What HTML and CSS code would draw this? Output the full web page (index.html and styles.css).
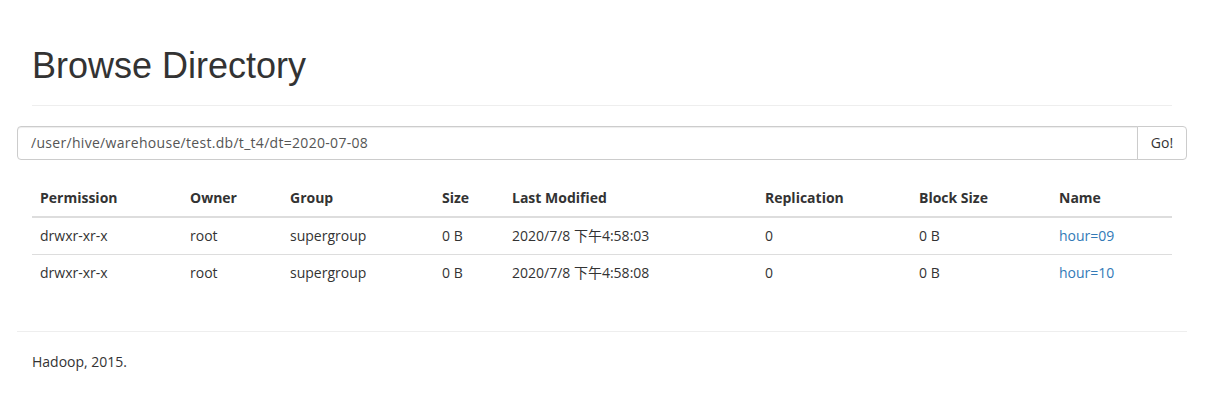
FILE: index.html
```html
<!DOCTYPE html>
<html>
<head>
<meta charset="utf-8">
<title>Browsing HDFS</title>
<link rel="stylesheet" href="styles.css">
</head>
<body>
<div class="container">
  <div class="page-header">
    <h1>Browse Directory</h1>
  </div>
  <div class="row">
    <form class="input-group">
      <input class="form-control" type="text" value="/user/hive/warehouse/test.db/t_t4/dt=2020-07-08">
      <button class="btn" type="button">Go!</button>
    </form>
  </div>
  <table class="table">
    <thead>
      <tr>
        <th class="c1">Permission</th>
        <th class="c2">Owner</th>
        <th class="c3">Group</th>
        <th class="c4">Size</th>
        <th class="c5">Last Modified</th>
        <th class="c6">Replication</th>
        <th class="c7">Block Size</th>
        <th class="c8">Name</th>
      </tr>
    </thead>
    <tbody>
      <tr>
        <td>drwxr-xr-x</td>
        <td>root</td>
        <td>supergroup</td>
        <td>0 B</td>
        <td>2020/7/8 下午4:58:03</td>
        <td>0</td>
        <td>0 B</td>
        <td><a href="#">hour=09</a></td>
      </tr>
      <tr>
        <td>drwxr-xr-x</td>
        <td>root</td>
        <td>supergroup</td>
        <td>0 B</td>
        <td>2020/7/8 下午4:58:08</td>
        <td>0</td>
        <td>0 B</td>
        <td><a href="#">hour=10</a></td>
      </tr>
    </tbody>
  </table>
  <div class="row footer">
    <hr>
    <p class="copy">Hadoop, 2015.</p>
  </div>
</div>
</body>
</html>
```

FILE: styles.css
```css
* { box-sizing: border-box; }
html, body { margin: 0; padding: 0; background: #fff; }
body {
  font-family: "Open Sans", "Noto Sans CJK SC", sans-serif;
  font-size: 14px;
  line-height: 20px;
  color: #333;
}
.container {
  width: 1170px;
  margin-left: 17px;
  padding: 0 15px;
}
.page-header {
  margin: 46px 0 20px;
  padding-bottom: 9px;
  border-bottom: 1px solid #eee;
}
.page-header h1 {
  margin: 0 0 10px;
  font-family: "Liberation Sans", Arial, sans-serif;
  font-weight: 500;
  font-size: 36px;
  line-height: 1.1;
  color: #333;
}
.row { margin: 0 -15px; display: flow-root; }
.input-group {
  display: flex;
  margin: 0;
}
.form-control {
  flex: 1;
  height: 34px;
  padding: 6px 12px 6px 13px;
  font: inherit;
  letter-spacing: 0.3px;
  color: #555;
  border: 1px solid #ccc;
  border-radius: 4px 0 0 4px;
  box-shadow: inset 0 1px 1px rgba(0,0,0,.075);
  outline: none;
}
.btn {
  width: 50px;
  height: 34px;
  padding: 6px 12px;
  margin-left: -1px;
  font: inherit;
  color: #333;
  background: #fff;
  border: 1px solid #ccc;
  border-radius: 0 4px 4px 0;
}
.table {
  width: 100%;
  margin: 20px 0 20px;
  border-collapse: collapse;
  border-spacing: 0;
}
.table th, .table td {
  padding: 8px;
  text-align: left;
  vertical-align: top;
  line-height: 20px;
}
.table th {
  font-weight: 700;
  border-bottom: 2px solid #ddd;
}
.table td { border-top: 1px solid #ddd; }
.c1 { width: 150px; }
.c2 { width: 100px; }
.c3 { width: 152px; }
.c4 { width: 70px; }
.c5 { width: 253px; }
.c6 { width: 154px; }
.c7 { width: 140px; }
.c8 { width: 121px; }
a { color: #337ab7; text-decoration: none; }
.footer hr {
  margin: 20px 0;
  border: 0;
  border-top: 1px solid #eee;
}
.copy {
  margin: 0 0 10px;
  padding: 0 15px;
}
```
